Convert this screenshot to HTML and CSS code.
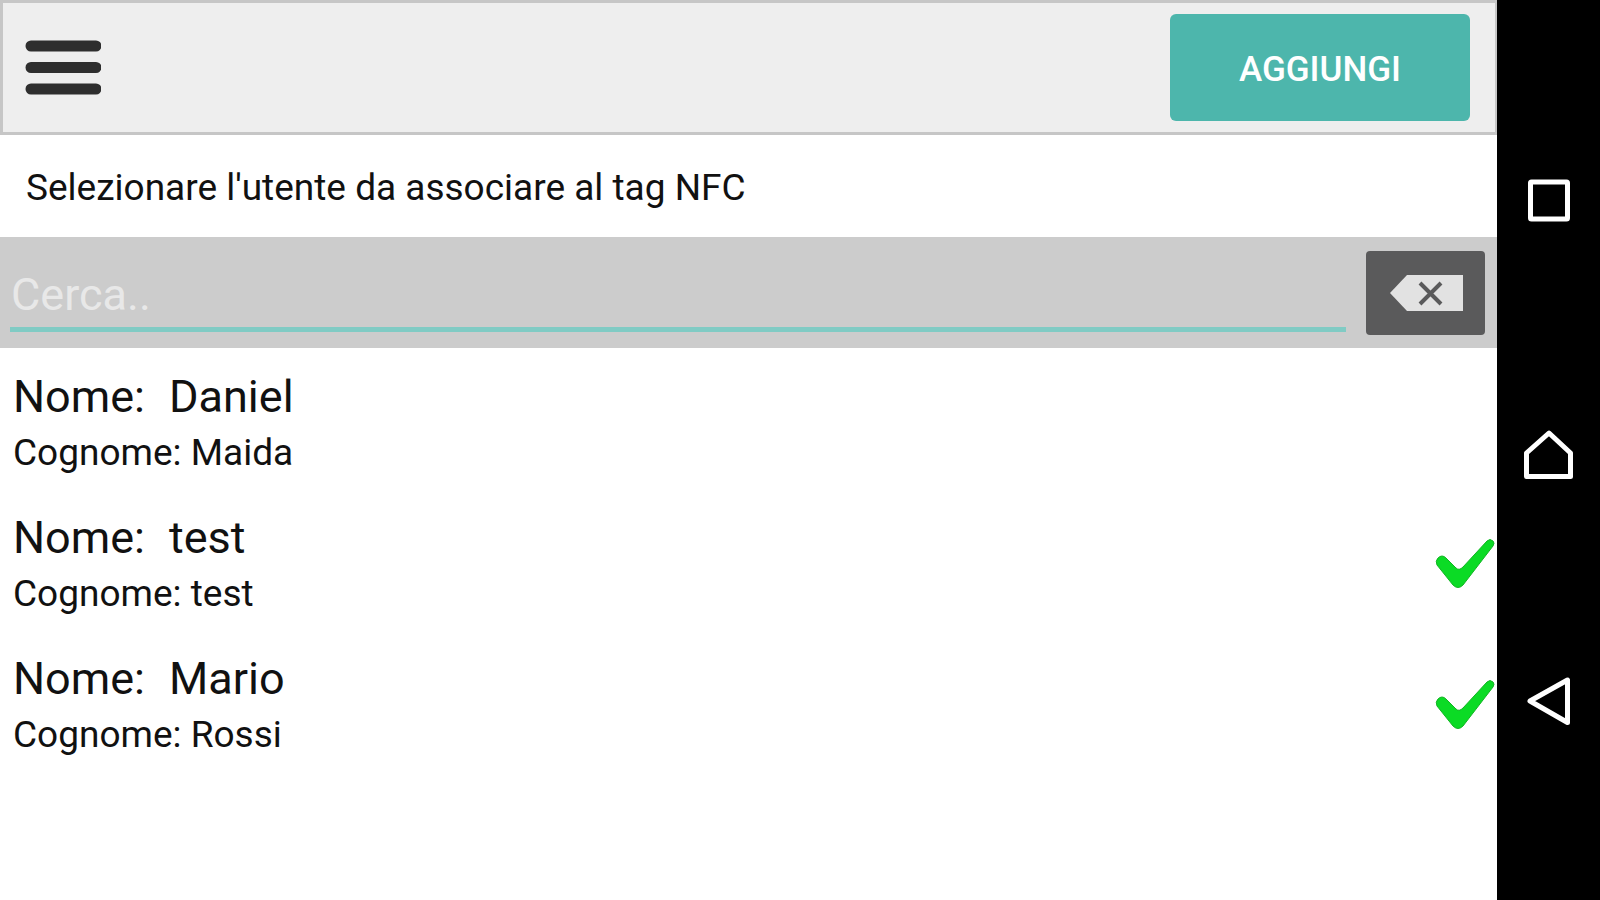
FILE: index.html
```html
<!DOCTYPE html>
<html lang="it">
<head>
<meta charset="utf-8">
<meta name="viewport" content="width=device-width, initial-scale=1">
<title>Associa tag NFC</title>
<link rel="stylesheet" href="styles.css">
</head>
<body>
<div class="device">
  <main class="app">
    <header class="toolbar">
      <button class="menu-button" type="button" aria-label="Menu">
        <svg class="menu-icon" viewBox="0 0 76 56" aria-hidden="true">
          <path d="M6 6H71M6 27.500H71M6 49H71" />
        </svg>
      </button>
      <button class="add-button" type="button">AGGIUNGI</button>
    </header>
    <h1 class="prompt">Selezionare l'utente da associare al tag NFC</h1>
    <form class="search">
      <input class="search-input" type="text" placeholder="Cerca.." aria-label="Cerca">
      <button class="clear-button" type="reset" aria-label="Cancella">
        <svg class="clear-icon" viewBox="0 0 74 36" aria-hidden="true">
          <path class="clear-shape" d="M1 18L18 0H74V36H18Z" />
          <path class="clear-cross" d="M31 8L52 29M52 8L31 29" />
        </svg>
      </button>
    </form>
    <ul class="users">
      <li class="user">
        <div class="user-text">
          <p class="name"><span>Nome:</span><span>Daniel</span></p>
          <p class="surname">Cognome: Maida</p>
        </div>
      </li>
      <li class="user">
        <div class="user-text">
          <p class="name"><span>Nome:</span><span>test</span></p>
          <p class="surname">Cognome: test</p>
        </div>
        <svg class="check" viewBox="0 0 60 52" role="img" aria-label="Associato">
          <path d="M3 20Q7 16 11 20L21 30Q24 33 28 29L52 3Q55 0 58 3Q60 5 58 8L28 47Q23 52 18 47L2 27Q0 23 3 20Z" />
        </svg>
      </li>
      <li class="user">
        <div class="user-text">
          <p class="name"><span>Nome:</span><span>Mario</span></p>
          <p class="surname">Cognome: Rossi</p>
        </div>
        <svg class="check" viewBox="0 0 60 52" role="img" aria-label="Associato">
          <path d="M3 20Q7 16 11 20L21 30Q24 33 28 29L52 3Q55 0 58 3Q60 5 58 8L28 47Q23 52 18 47L2 27Q0 23 3 20Z" />
        </svg>
      </li>
    </ul>
  </main>
  <nav class="system-bar" aria-label="Sistema">
    <button class="system-button" type="button" aria-label="Recenti">
      <svg viewBox="0 0 60 60" aria-hidden="true"><rect x="11.500" y="11" width="37" height="37" rx="1" /></svg>
    </button>
    <button class="system-button" type="button" aria-label="Home">
      <svg viewBox="0 0 60 60" aria-hidden="true"><path d="M30 13L51.500 33V56.500H7.500V33Z" /></svg>
    </button>
    <button class="system-button" type="button" aria-label="Indietro">
      <svg viewBox="0 0 60 60" aria-hidden="true"><path d="M11 32L48.500 11V53.500Z" /></svg>
    </button>
  </nav>
</div>
</body>
</html>
```
FILE: styles.css
```css
* {
  box-sizing: border-box;
}

body {
  margin: 0;
  background: #fff;
  color: #111;
  font-family: Roboto, "Liberation Sans", sans-serif;
}

button {
  padding: 0;
  border: 0;
  background: none;
  font: inherit;
  cursor: pointer;
}

svg {
  display: block;
}

.device {
  display: flex;
  min-height: 100vh;
}

.app {
  flex: 1;
  min-width: 0;
}

.toolbar {
  display: flex;
  align-items: center;
  justify-content: space-between;
  padding: 11px 25px 11px 22px;
  border: 3px solid #c6c6c6;
  border-right-width: 2px;
  background: #eee;
}

.menu-icon {
  width: 76px;
  height: 56px;
  fill: none;
  stroke: #2e2e2e;
  stroke-width: 11;
  stroke-linecap: round;
}

.add-button {
  width: 300px;
  height: 107px;
  padding-top: 4px;
  border-radius: 6px;
  background: #4db6ac;
  color: #fff;
  font-size: 35px;
  font-weight: 500;
}

.prompt {
  margin: 0;
  padding: 30px 26px 26px;
  font-size: 37px;
  font-weight: 400;
  line-height: 46px;
}

.search {
  display: flex;
  align-items: flex-start;
  gap: 20px;
  padding: 14px 12px 13px 10px;
  background: #ccc;
}

.search-input {
  flex: 1;
  min-width: 0;
  height: 81px;
  padding: 10px 1px 0;
  border: 0;
  border-bottom: 5px solid #80cbc4;
  background: none;
  color: #111;
  font: inherit;
  font-size: 45px;
  outline: 0;
}

.search-input::placeholder {
  color: #e8e8e8;
  opacity: 1;
}

.clear-button {
  display: grid;
  place-items: center;
  width: 119px;
  height: 84px;
  border-radius: 4px;
  background: #5a5a5b;
}

.clear-icon {
  width: 74px;
  height: 36px;
}

.clear-shape {
  fill: #e2e2e2;
}

.clear-cross {
  fill: none;
  stroke: #5a5a5b;
  stroke-width: 4;
}

.users {
  margin: 0;
  padding: 10px 0 0;
  list-style: none;
}

.user {
  display: flex;
  align-items: center;
  justify-content: space-between;
  height: 141px;
  padding: 0 2px 12px 13px;
}

.name,
.surname {
  margin: 0;
}

.name {
  display: flex;
  gap: 24px;
  font-size: 45px;
  line-height: 60px;
}

.surname {
  font-size: 37px;
  line-height: 52px;
}

.check {
  width: 60px;
  height: 52px;
  fill: #0bdb25;
  stroke: #12b523;
  stroke-width: 1;
}

.system-bar {
  display: flex;
  flex-direction: column;
  align-items: center;
  justify-content: space-between;
  width: 103px;
  padding: 19vh 0;
  background: #000;
}

.system-button svg {
  width: 60px;
  height: 60px;
  fill: none;
  stroke: #fff;
  stroke-width: 5;
  stroke-linejoin: round;
}
```
